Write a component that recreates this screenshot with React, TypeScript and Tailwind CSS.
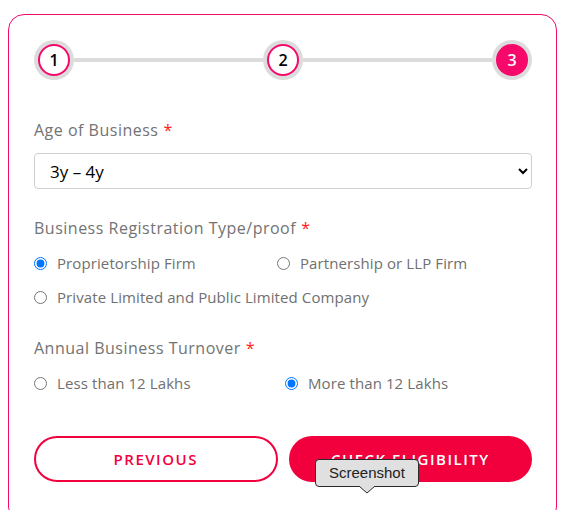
import { useState } from 'react'

const font = { fontFamily: '"Open Sans", "Liberation Sans", sans-serif' }

const Step = ({ n, active }: { n: number; active?: boolean }) => (
    <div className='w-10 h-10 rounded-full bg-[#dcdcdc] flex items-center justify-center shrink-0'>
        <div className={`w-8 h-8 rounded-full flex items-center justify-center text-[16px] font-semibold ${active ? 'bg-[#f7086b] text-white' : 'bg-white border-2 border-[#f7086b] text-black'}`}>{n}</div>
    </div>
)

const Label = ({ text }: { text: string }) => (
    <div className='h-[22px] flex items-center text-[16px] tracking-[0.5px] text-[#737373]'>
        {text}<span className='text-[#ff1a1a] ml-[5px]'>*</span>
    </div>
)

const Radio = ({ name, label, checked, onPick, width }: { name: string; label: string; checked: boolean; onPick: () => void; width?: string }) => (
    <label className={`h-5 flex items-center text-[15px] tracking-[0.1px] text-[#707070] cursor-pointer ${width ?? ''}`}>
        <input type='radio' name={name} checked={checked} onChange={onPick} className='w-[13px] h-[13px] m-0 mr-[10px]' />
        {label}
    </label>
)

export default function App() {
    const [age, setAge] = useState('3-4')
    const [reg, setReg] = useState('prop')
    const [turn, setTurn] = useState('more')
    return <div className='w-[569px] h-[510px] overflow-hidden bg-white relative' style={font}>
        <div className='ml-2 mr-3 mt-[14px] border border-[#f7086b] rounded-[16px] pl-[25px] pr-[24px] pt-[25px] pb-10'>
            <div className='flex items-center'>
                <Step n={1} />
                <div className='flex-1 h-1 bg-[#dcdcdc]' />
                <Step n={2} />
                <div className='flex-1 h-1 bg-[#dcdcdc]' />
                <Step n={3} active />
            </div>

            <div className='mt-[39px]'>
                <Label text='Age of Business' />
                <select value={age} onChange={(e) => setAge(e.target.value)} className='mt-3 w-full h-9 border border-[#cfcfcf] rounded pl-[11px] pr-2 text-[17px] text-black bg-white'>
                    <option value='1-2'>1y – 2y</option>
                    <option value='2-3'>2y – 3y</option>
                    <option value='3-4'>3y – 4y</option>
                </select>
            </div>

            <div className='mt-7'>
                <Label text='Business Registration Type/proof' />
                <div className='mt-[14px] flex'>
                    <Radio name='reg' label='Proprietorship Firm' checked={reg === 'prop'} onPick={() => setReg('prop')} width='w-[243px]' />
                    <Radio name='reg' label='Partnership or LLP Firm' checked={reg === 'llp'} onPick={() => setReg('llp')} />
                </div>
                <div className='mt-[14px] flex'>
                    <Radio name='reg' label='Private Limited and Public Limited Company' checked={reg === 'pvt'} onPick={() => setReg('pvt')} />
                </div>
            </div>

            <div className='mt-[30px]'>
                <Label text='Annual Business Turnover' />
                <div className='mt-[14px] flex'>
                    <Radio name='turn' label='Less than 12 Lakhs' checked={turn === 'less'} onPick={() => setTurn('less')} width='w-[251px]' />
                    <Radio name='turn' label='More than 12 Lakhs' checked={turn === 'more'} onPick={() => setTurn('more')} />
                </div>
            </div>

            <div className='mt-[43px] grid grid-cols-2 gap-[11px]'>
                <button className='h-[46px] rounded-full border-2 border-[#f2003d] text-[#f2003d] text-[15px] font-semibold tracking-[0.1em] bg-white'>PREVIOUS</button>
                <button className='h-[46px] rounded-full border-2 border-[#f2003d] bg-[#f2003d] text-white text-[15px] font-semibold tracking-[0.1em]'>CHECK ELIGIBILITY</button>
            </div>
        </div>

        <div className='absolute left-[315px] top-[459px] flex flex-col items-center'>
            <div className='h-7 px-[13px] flex items-center rounded-[4px] border border-[#2a2a2a] bg-[#e0e0e0] text-[15px] text-[#222]' style={{ fontFamily: '"Liberation Sans", Arial, sans-serif' }}>Screenshot</div>
            <svg width='16' height='8' viewBox='0 0 16 8' className='-mt-px'>
                <path d='M0 0 L8 7 L16 0' fill='#e0e0e0' stroke='#2a2a2a' strokeWidth='1' />
            </svg>
        </div>
    </div>
}
